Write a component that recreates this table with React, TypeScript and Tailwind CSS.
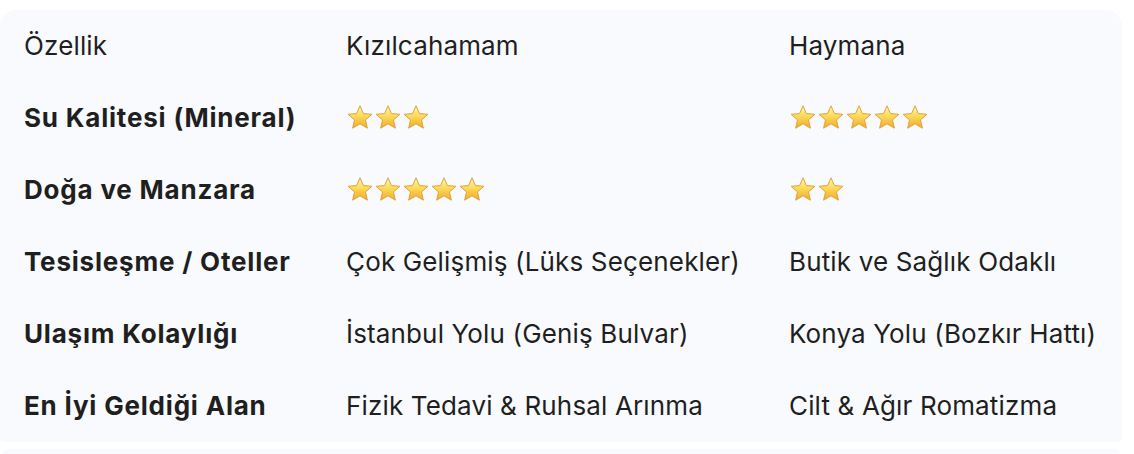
import React from 'react';

const Star: React.FC = () => (
  <svg width="28" height="27" viewBox="0 0 28 27" className="block">
    <defs>
      <linearGradient id="starFill" x1="0" y1="0" x2="0" y2="1">
        <stop offset="0%" stopColor="#fff6b8" />
        <stop offset="45%" stopColor="#fbdc5a" />
        <stop offset="100%" stopColor="#efa92c" />
      </linearGradient>
    </defs>
    <path
      d="M14 1.8 L17.4 9.6 L25.9 10.3 L19.5 15.9 L21.4 24.2 L14 19.8 L6.6 24.2 L8.5 15.9 L2.1 10.3 L10.6 9.6 Z"
      fill="url(#starFill)"
      stroke="#e4a23c"
      strokeWidth="1"
      strokeLinejoin="round"
    />
  </svg>
);

const Stars: React.FC<{ count: number }> = ({ count }) => (
  <div className="flex items-center">
    {Array.from({ length: count }).map((_, i) => (
      <Star key={i} />
    ))}
  </div>
);

type Cell = string | { stars: number };

const rows: { label: string; a: Cell; b: Cell }[] = [
  { label: 'Su Kalitesi (Mineral)', a: { stars: 3 }, b: { stars: 5 } },
  { label: 'Doğa ve Manzara', a: { stars: 5 }, b: { stars: 2 } },
  { label: 'Tesisleşme / Oteller', a: 'Çok Gelişmiş (Lüks Seçenekler)', b: 'Butik ve Sağlık Odaklı' },
  { label: 'Ulaşım Kolaylığı', a: 'İstanbul Yolu (Geniş Bulvar)', b: 'Konya Yolu (Bozkır Hattı)' },
  { label: 'En İyi Geldiği Alan', a: 'Fizik Tedavi & Ruhsal Arınma', b: 'Cilt & Ağır Romatizma' },
];

const renderCell = (c: Cell) =>
  typeof c === 'string' ? <span>{c}</span> : <Stars count={c.stars} />;

export default function App() {
  return (
    <div className="w-[1134px] h-[454px] overflow-hidden bg-white pt-[10px] font-['Inter',sans-serif] text-[#1f1f1f] text-[26px] tracking-[0.15px]">
      <div className="w-[1122px] bg-[#f8fafd] rounded-t-[16px] rounded-b-[4px]">
        <div className="grid grid-cols-[322px_443px_357px] h-[72px] pb-[2px] items-center">
          <div className="pl-6">Özellik</div>
          <div className="pl-6">Kızılcahamam</div>
          <div className="pl-6">Haymana</div>
        </div>
        {rows.map((r) => (
          <div key={r.label} className="grid grid-cols-[322px_443px_357px] h-[72px] pb-[2px] items-center">
            <div className="pl-6 font-bold tracking-[0.8px] whitespace-nowrap">{r.label}</div>
            <div className="pl-6 whitespace-nowrap">{renderCell(r.a)}</div>
            <div className="pl-6 whitespace-nowrap">{renderCell(r.b)}</div>
          </div>
        ))}
      </div>
      <div className="mt-[7px] ml-[2px] w-[1118px] h-[20px] bg-[#f8fafd] rounded-[6px]" />
    </div>
  );
}
